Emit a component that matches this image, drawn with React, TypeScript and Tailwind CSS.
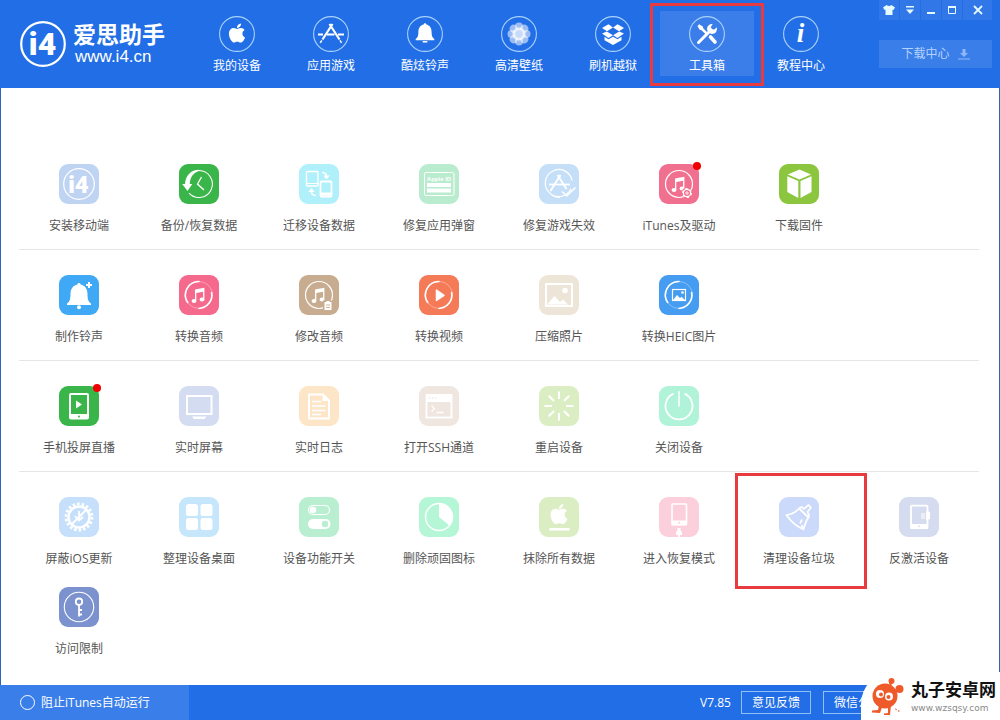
import React, { useState } from 'react';
import { FaApple } from 'react-icons/fa';
import { clsx } from 'clsx';

interface Tool {
  name: string;
  tile: string;
  icon: React.ReactNode;
  dot?: boolean;
  marked?: boolean;
}

interface NavItem {
  name: string;
  icon: React.ReactNode;
}

const BELL = 'M20 8c-1 0-1.6.7-1.6 1.6C14 10.500 11.500 14 11.500 19c0 5-.7 7.500-3.500 9.500V30h24v-1.500c-2.800-2-3.500-4.500-3.500-9.500 0-5-2.500-8.500-6.900-9.400C21.600 8.700 21 8 20 8z';

const ring = <circle cx="20" cy="20" r="13.5" fill="none" stroke="#fff" strokeWidth="1.2" />;

// ring that fades out on its way round, used by the converters
const spinRing = (
  <g fill="none" stroke="#fff">
    <circle cx="20" cy="20" r="13.5" strokeWidth="0.7" opacity="0.5" />
    <path d="M20.500 6.500A13.500 13.500 0 0 0 9 28" strokeWidth="1.6" />
    <path d="M19.500 33.500A13.500 13.500 0 0 0 32.500 17" strokeWidth="1.6" />
  </g>
);

const note = (
  <g fill="#fff">
    <ellipse cx="15" cy="26" rx="2.4" ry="1.9" />
    <ellipse cx="23" cy="24.5" rx="2.4" ry="1.9" />
    <path d="M16 14.500l9.400-1.700v11.700h-1.300v-7.700l-6.800 1.200v8H16z" />
  </g>
);

const i4Text = (
  <text x="19.500" y="28.500" textAnchor="middle" fill="#fff" fontSize="24" fontWeight="900" fontFamily="Roboto, sans-serif">
    i4
  </text>
);

const rays = [0, 45, 90, 135, 180, 225, 270, 315];

const rows: Tool[][] = [
  [
    {
      name: '安装移动端',
      tile: 'bg-[#bfd3f3]',
      icon: <>{i4Text}<circle cx="20" cy="20" r="15.3" fill="none" stroke="#fff" strokeWidth="1.2" /></>,
    },
    {
      name: '备份/恢复数据',
      tile: 'bg-[#3ab54a]',
      icon: (
        <>
          <path d="M20 6.500A13.500 13.500 0 1 1 10 29.200" fill="none" stroke="#fff" strokeWidth="1.1" />
          <path d="M20 5.800C12 6 6.500 11.500 6 20H3.200l5.300 7 4.800-7h-2.500C11 13 14.500 8.500 20 7z" fill="#fff" />
          <path d="M22.500 13L18.500 20l6.500 6" fill="none" stroke="#fff" strokeWidth="1.3" />
        </>
      ),
    },
    {
      name: '迁移设备数据',
      tile: 'bg-[#b0f0fb]',
      icon: (
        <g fill="none" stroke="#fff">
          <rect x="7.500" y="7.500" width="11.500" height="14.500" rx="1" strokeWidth="1.4" />
          <path d="M7.500 19.500H19" />
          <rect x="21.500" y="17.500" width="11" height="15" rx="1" strokeWidth="1.8" />
          <path d="M21.500 30h11" strokeWidth="3" />
          <path d="M23 8.500c3 0 4.500 1.500 4.500 4" strokeWidth="1.6" />
          <path d="M24.300 11.500h6.400l-3.200 4z" fill="#fff" stroke="none" />
          <path d="M17 31.500c-3 0-4.500-1.500-4.500-4" strokeWidth="1.6" />
          <path d="M9.300 28h6.400l-3.200-4z" fill="#fff" stroke="none" />
        </g>
      ),
    },
    {
      name: '修复应用弹窗',
      tile: 'bg-[#b9ebcf]',
      icon: (
        <>
          <rect x="5.500" y="8.500" width="29.500" height="23" rx="1.5" fill="none" stroke="#fff" />
          <text x="20" y="17" textAnchor="middle" fill="#fff" fontSize="6" fontWeight="700" fontFamily="Liberation Sans, sans-serif">
            Apple ID
          </text>
          <rect x="8" y="19" width="24" height="4" fill="#fff" />
          <rect x="8" y="24.500" width="24" height="4" fill="#fff" />
        </>
      ),
    },
    {
      name: '修复游戏失效',
      tile: 'bg-[#c5dff8]',
      icon: (
        <g fill="none" stroke="#fff">
          <path d="M31.500 26A13.500 13.500 0 1 1 33.400 18" transform="rotate(-6 20 20)" strokeWidth="1.2" />
          <path d="M21 33.400c-3 .2-6-.5-8.500-2.200" />
          <path d="M21.500 11L11.500 27M18.500 11l9 14" strokeWidth="2" />
          <path d="M10 20.500h21" strokeWidth="1.8" />
          <path d="M23 27.500l4.700 4.500 8.800-8.500" strokeWidth="1.6" />
        </g>
      ),
    },
    {
      name: 'iTunes及驱动',
      tile: 'bg-[#f2708f]',
      dot: true,
      icon: (
        <>
          {ring}
          {note}
          <circle cx="28" cy="29" r="5.5" fill="#f2708f" />
          <circle cx="28" cy="29" r="3.6" fill="none" stroke="#fff" strokeWidth="1.2" />
          <circle cx="28" cy="29" r="4.4" fill="none" stroke="#fff" strokeWidth="1.2" strokeDasharray="2.300 2.300" />
          <circle cx="28" cy="29" r="1.2" fill="none" stroke="#fff" strokeWidth="0.9" />
        </>
      ),
    },
    {
      name: '下载固件',
      tile: 'bg-[#8cc63f]',
      icon: <path d="M8.800 10.500L20.500 5.500 32 10.500l-11.500 5zM8.300 12.200L19.300 17v17L8.300 28zM32.500 12.200L21.500 17v17l11-6z" fill="#fff" />,
    },
  ],
  [
    {
      name: '制作铃声',
      tile: 'bg-[#3fa9f5]',
      icon: (
        <g fill="#fff">
          <path d={BELL} />
          <circle cx="20" cy="32.300" r="2" />
          <path d="M29 7h2v2h2v2h-2v2h-2v-2h-2V9h2z" />
        </g>
      ),
    },
    { name: '转换音频', tile: 'bg-[#f56a8c]', icon: <>{spinRing}{note}</> },
    {
      name: '修改音频',
      tile: 'bg-[#c7ac90]',
      icon: (
        <>
          {ring}
          {note}
          <path d="M24 25.500h10V36H24z" fill="#c7ac90" />
          <path d="M25.500 27h2v-1h3v1h2v8h-7z" fill="#fff" />
          <path d="M27 30h4M27 32.500h4" stroke="#c7ac90" strokeWidth="0.9" />
        </>
      ),
    },
    {
      name: '转换视频',
      tile: 'bg-[#f47a58]',
      icon: <>{spinRing}<path d="M17.500 15v10.500L25 20.300z" fill="#fff" stroke="#fff" strokeLinejoin="round" strokeWidth="1.5" /></>,
    },
    {
      name: '压缩照片',
      tile: 'bg-[#ece5d8]',
      icon: (
        <>
          <rect x="7" y="9" width="26" height="22" fill="none" stroke="#fff" strokeWidth="2" />
          <circle cx="26" cy="15.500" r="2.800" fill="#fff" />
          <path d="M8 29.500l7.500-8.500 5.500 6 3-2.500 5 5z" fill="#fff" />
        </>
      ),
    },
    {
      name: '转换HEIC图片',
      tile: 'bg-[#459cf0]',
      icon: (
        <>
          {spinRing}
          <rect x="13.500" y="14.500" width="13" height="11" fill="none" stroke="#fff" strokeWidth="1.2" />
          <circle cx="23.500" cy="17.500" r="1.300" fill="#fff" />
          <path d="M14 25l4-5 3 3 1.500-1.200L26 25z" fill="#fff" />
        </>
      ),
    },
  ],
  [
    {
      name: '手机投屏直播',
      tile: 'bg-[#3ab54a]',
      dot: true,
      icon: (
        <>
          <rect x="11" y="8" width="18" height="24.500" rx="1" fill="none" stroke="#fff" strokeWidth="2" />
          <path d="M11 28h18v5H11z" fill="#fff" />
          <circle cx="20" cy="30.500" r="1" fill="#3ab54a" />
          <path d="M17 14.500v8l6-4z" fill="#fff" />
        </>
      ),
    },
    {
      name: '实时屏幕',
      tile: 'bg-[#d3dcf0]',
      icon: (
        <>
          <rect x="8" y="10" width="24.500" height="18" fill="none" stroke="#fff" strokeWidth="2" />
          <path d="M13 30.500h14.500l-2 2.500h-10.500z" fill="#fff" />
        </>
      ),
    },
    {
      name: '实时日志',
      tile: 'bg-[#fde6c8]',
      icon: (
        <>
          <path d="M10 8.500h14l6 6v18H10z" fill="none" stroke="#fff" strokeWidth="2" />
          <path d="M23.500 8v7H30.500z" fill="#fff" />
          <path d="M13 15.500h9M13 20h13.500M13 24.500h13.500M13 28.500h9" stroke="#fff" strokeWidth="1.5" />
        </>
      ),
    },
    {
      name: '打开SSH通道',
      tile: 'bg-[#efe6df]',
      icon: (
        <>
          <rect x="7.500" y="9" width="25" height="22.500" fill="none" stroke="#fff" strokeWidth="1.800" />
          <path d="M7 8h26v8H7z" fill="#fff" />
          <path d="M10 12h1.500M13 12h1.500M16 12h1.500" stroke="#e8dcd2" />
          <path d="M12.500 19.500l3 3-3 3M17.500 26.500h7" fill="none" stroke="#fff" strokeWidth="1.300" />
        </>
      ),
    },
    {
      name: '重启设备',
      tile: 'bg-[#dbeec3]',
      icon: (
        <g stroke="#fff" strokeWidth="2">
          {rays.map((deg) => (
            <path key={deg} d="M20 5.500v7.500" transform={`rotate(${deg} 20 20)`} />
          ))}
        </g>
      ),
    },
    {
      name: '关闭设备',
      tile: 'bg-[#b0f3d9]',
      icon: (
        <g fill="none" stroke="#fff" strokeWidth="1.800">
          <path d="M14.500 7.600a13.500 13.500 0 1 0 11 0" />
          <path d="M20 5v15.500" strokeWidth="1.500" />
        </g>
      ),
    },
  ],
  [
    {
      name: '屏蔽iOS更新',
      tile: 'bg-[#c6e0fb]',
      icon: (
        <g fill="none" stroke="#fff">
          <circle cx="20" cy="20" r="10.500" strokeWidth="2.400" />
          <circle cx="20" cy="20" r="13" strokeWidth="2.800" strokeDasharray="2.500 2.038" />
          <path d="M12.500 27.500l15-15" strokeWidth="2" />
          <path d="M20 14v8M16 19l4 4.500 4-3.500" strokeWidth="1.800" />
        </g>
      ),
    },
    {
      name: '整理设备桌面',
      tile: 'bg-[#c6e6fb]',
      icon: (
        <g fill="#fff">
          <rect x="7" y="7" width="12" height="12" rx="2.500" />
          <rect x="21.500" y="7" width="12" height="12" rx="2.500" />
          <rect x="7" y="21" width="12" height="12" rx="2.500" />
          <rect x="21.500" y="21" width="12" height="12" rx="2.500" />
        </g>
      ),
    },
    {
      name: '设备功能开关',
      tile: 'bg-[#b9efd0]',
      icon: (
        <>
          <rect x="9.500" y="8.500" width="21" height="9" rx="4.500" fill="none" stroke="#fff" strokeWidth="1.200" />
          <circle cx="14" cy="13" r="3.200" fill="#fff" />
          <rect x="9" y="22" width="22.500" height="10" rx="5" fill="#fff" />
          <circle cx="26" cy="27" r="3.200" fill="#b9efd0" />
        </>
      ),
    },
    {
      name: '删除顽固图标',
      tile: 'bg-[#b4f6d6]',
      icon: (
        <>
          <circle cx="20" cy="20" r="13.500" fill="none" stroke="#fff" strokeWidth="1.500" />
          <path d="M20 20V6.500a13.500 13.500 0 0 1 10.500 22z" fill="#fff" />
        </>
      ),
    },
    {
      name: '抹除所有数据',
      tile: 'bg-[#dbeec3]',
      icon: (
        <>
          <FaApple x="8.500" y="5.500" size={23} color="#fff" />
          <rect x="10.500" y="31" width="20" height="2.500" fill="#fff" />
        </>
      ),
    },
    {
      name: '进入恢复模式',
      tile: 'bg-[#fccfdc]',
      icon: (
        <>
          <rect x="13" y="7" width="14.500" height="20.500" rx="1" fill="none" stroke="#fff" strokeWidth="1.600" />
          <path d="M12.500 23.500h15.500v5H12.500z" fill="#fff" />
          <circle cx="20.200" cy="25.800" r="1" fill="#fccfdc" />
          <path d="M18.500 31h3v2.500l1.500 1.500v3h-2v2h-1.800v-2H17v-3l1.500-1.500z" fill="#fff" />
        </>
      ),
    },
    {
      name: '清理设备垃圾',
      tile: 'bg-[#cbd9fb]',
      marked: true,
      icon: (
        <g fill="none" stroke="#fff" strokeWidth="1.700" strokeLinejoin="round">
          <path d="M7.500 18c5-.5 9-2.500 12.500-6.500l9.500 9c-3 3.500-3.500 7.500-5 12C18 29.500 12 25 7.500 18z" />
          <path d="M20 11.500l2.500-1.500 2.500 1.800 4.500-3.800 2.500 2.500-3.500 4.500 1.500 3-.5 2.500z" />
          <path d="M21 26.500l2-4M24.500 32l-2-4" />
        </g>
      ),
    },
    {
      name: '反激活设备',
      tile: 'bg-[#d5dcf0]',
      icon: (
        <>
          <rect x="12" y="8.700" width="16.500" height="22" rx="1" fill="none" stroke="#fff" strokeWidth="1.800" />
          <path d="M11.500 27h17.500v5H11.500z" fill="#fff" />
          <circle cx="20.200" cy="29.300" r="0.900" fill="#d5dcf0" />
          <path d="M22 16h4v6h-4z" fill="#fff" opacity="0.5" />
          <path d="M27 14l4 1v7l-4 1z" fill="#fff" />
        </>
      ),
    },
    {
      name: '访问限制',
      tile: 'bg-[#7b92cf]',
      icon: (
        <g fill="none" stroke="#fff">
          <circle cx="20" cy="20" r="14.700" strokeWidth="1.100" />
          <circle cx="20" cy="14.700" r="3.200" strokeWidth="1.800" />
          <path d="M20 18v11.500M20 23h3M20 27.500h3" strokeWidth="1.800" />
        </g>
      ),
    },
  ],
];

const navItems: NavItem[] = [
  { name: '我的设备', icon: <FaApple x="7" y="6" size={22} color="#fff" /> },
  {
    name: '应用游戏',
    icon: (
      <g fill="none" stroke="#fff" strokeWidth="2.200">
        <path d="M19.500 8L9.500 23.500M16.500 8l10 15.500" />
        <path d="M5 18.500h5M14 18.500h7.500M25 18.500h6" />
        <path d="M8.800 24.300l-1.500 2.500M27 24.300l1.500 2.500" strokeWidth="1.500" />
      </g>
    ),
  },
  {
    name: '酷炫铃声',
    icon: (
      <g fill="#fff" transform="translate(2.500 2.500) scale(.775)">
        <path d={BELL} transform="translate(0 -2)" />
        <path d="M17 29h6v2h-6z" />
      </g>
    ),
  },
  {
    name: '高清壁纸',
    icon: (
      <g fill="#fff">
        {rays.map((deg) => (
          <circle key={deg} cx="18" cy="10.500" r="4" opacity="0.55" transform={`rotate(${deg} 18 18)`} />
        ))}
        <circle cx="18" cy="18" r="6.500" opacity="0.75" />
      </g>
    ),
  },
  {
    name: '刷机越狱',
    icon: (
      <path
        d="M7 12l6.500-3.800 4.500 3.300-6 3.800zM29 12l-6.500-3.800-4.500 3.300 6 3.800zM7 17.500l4.800-2 6.200 3.700-4.500 2.800zM29 17.500l-4.800-2-6.200 3.700 4.500 2.800zM9.500 20.800l4 2.500 4.500-2.500 4.500 2.500 4-2.500v3.500L18 29l-8.500-4.700z"
        fill="#fff"
      />
    ),
  },
  {
    name: '工具箱',
    icon: (
      <>
        <path d="M9.500 26.500L22 14" stroke="#fff" strokeWidth="3" strokeLinecap="round" />
        <path d="M27.700 11.200a5 5 0 1 1-4-3.200l-2 3.200 1.500 2 2.200.3z" fill="#fff" />
        <path d="M8.500 10l1.700-1.700 3.600 2.200.6 1.900 4.600 4.600-1.800 1.800-4.700-4.500-1.900-.6z" fill="#fff" />
        <path d="M21.500 21l4.500 5" stroke="#fff" strokeWidth="3.600" strokeLinecap="round" />
      </>
    ),
  },
  {
    name: '教程中心',
    icon: (
      <text x="17.500" y="26" textAnchor="middle" fill="#fff" fontSize="27" fontWeight="700" fontStyle="italic" fontFamily="Liberation Serif, serif">
        i
      </text>
    ),
  },
];

// red frame that points the reader to a control
function Frame({ className }: { className: string }) {
  return <span className={clsx('pointer-events-none absolute border-3 border-[#e83b3f]', className)} />;
}

function ToolButton({ tool }: { tool: Tool }) {
  return (
    <button type="button" className="relative flex flex-col items-center gap-3">
      <span className={clsx('relative size-10 rounded-[9px]', tool.tile)}>
        <svg viewBox="0 0 40 40" className="size-10">{tool.icon}</svg>
        {tool.dot && <span className="absolute -top-0.5 -right-0.5 size-2 rounded-full bg-[#f00000]" />}
      </span>
      <span className="whitespace-nowrap">{tool.name}</span>
      {tool.marked && <Frame className="-top-6 -right-2 -bottom-5 -left-1" />}
    </button>
  );
}

function WindowButtons() {
  const btn = 'flex h-5 flex-1 items-center justify-center bg-[#3177e8]';
  return (
    <div className="flex gap-px">
      <button type="button" aria-label="皮肤" className={btn}>
        <svg viewBox="0 0 12 10" className="h-2.5 w-3" fill="#e4fbff">
          <path d="M3.500 0q2.500 2 5 0L12 2.500 10.500 5 9.500 4.500V10h-7V4.500L1.500 5 0 2.500z" />
        </svg>
      </button>
      <button type="button" aria-label="菜单" className={btn}>
        <svg viewBox="0 0 10 8" className="h-2 w-2.5" fill="#e4fbff">
          <path d="M1 0h8v1.500H1zM1 3.500h8L5 8z" />
        </svg>
      </button>
      <button type="button" aria-label="最小化" className={btn}>
        <svg viewBox="0 0 10 10" className="size-2.5" fill="#e4fbff">
          <path d="M1 7h8v2H1z" />
        </svg>
      </button>
      <button type="button" aria-label="最大化" className={btn}>
        <svg viewBox="0 0 10 10" className="size-2.5" fill="none" stroke="#e4fbff">
          <path d="M1.500 2h7v6.500h-7z" />
          <path d="M1 2h8" strokeWidth="2" />
        </svg>
      </button>
      <button type="button" aria-label="关闭" className="flex h-5 w-[29px] items-center justify-center bg-[#3177e8]">
        <svg viewBox="0 0 10 10" className="size-2.5" stroke="#e4fbff" strokeWidth="1.8">
          <path d="M1 1l8 8M9 1L1 9" />
        </svg>
      </button>
    </div>
  );
}

function Header({ active, onSelect }: { active: string; onSelect: (name: string) => void }) {
  return (
    <header className="flex h-[88px] bg-[#226ee6] pr-2 text-white">
      <div className="flex w-[190px] shrink-0 items-center gap-[7px] pl-5">
        <svg viewBox="0 0 46 46" className="size-[46px]">
          <circle cx="23" cy="23" r="21.800" fill="none" stroke="#fff" strokeWidth="2.200" />
          <text x="22.500" y="34" textAnchor="middle" fill="#fff" fontSize="32" fontWeight="900" fontFamily="Roboto, sans-serif">
            i4
          </text>
        </svg>
        <div className="font-['Liberation_Sans','Noto_Sans_CJK_SC',sans-serif]">
          <div className="text-[23px] leading-[26px] font-bold">爱思助手</div>
          <div className="pl-0.5 text-[17px] leading-[18px]">www.i4.cn</div>
        </div>
      </div>

      <nav className="flex pt-[11px]">
        {navItems.map((item) => (
          <button
            key={item.name}
            type="button"
            onClick={() => onSelect(item.name)}
            className={clsx(
              'relative flex h-[65px] w-[94px] flex-col items-center gap-1 pt-[5px]',
              item.name === active && 'bg-[#3b7de9]'
            )}
          >
            <svg viewBox="0 0 36 36" className="size-9 shrink-0">
              <circle cx="18" cy="18" r="17.400" fill="none" stroke="#a9d2fb" strokeWidth="1.100" />
              {item.icon}
            </svg>
            <span>{item.name}</span>
            {item.name === active && <Frame className="-top-2 -right-2.5 -bottom-2.5 -left-2.5" />}
          </button>
        ))}
      </nav>

      <div className="ml-auto flex w-[113px] flex-col gap-5">
        <WindowButtons />
        <button type="button" className="flex h-7 items-center justify-center gap-2 bg-[#3a7eea] text-[#b4d3fa]">
          下载中心
          <svg viewBox="0 0 12 12" className="size-3" fill="#8fb8f5">
            <path d="M4.500 1h3v4H10L6 9 2 5h2.500zM0 10.500h12v1H0z" />
          </svg>
        </button>
      </div>
    </header>
  );
}

function SiteMark() {
  return (
    <div className="absolute right-0 bottom-0 flex h-12 items-center gap-1 rounded-tl-[32px] bg-white pr-1 pl-2.5">
      <svg viewBox="0 0 36 38" className="h-[38px] w-9" fill="#ef5a2b">
        <circle cx="14" cy="19" r="12.500" />
        <circle cx="20.500" cy="4" r="3" />
        <circle cx="28.500" cy="12" r="4" />
        <path d="M18 7l2-4 2 1-2 5zM22 14l6-4 1.500 2-6 5z" />
        <path d="M8 28l-1 5-6 .5v2l8 .5 2.500-7zM17 29v7l-4 .5v1.500h6l1-10z" />
        <path d="M24 31l2 1.500-1 1zM27 33l2 1-1.500 1z" />
        <circle cx="9" cy="17" r="4" fill="#fff" />
        <circle cx="18" cy="19.500" r="4" fill="#fff" />
        <circle cx="10" cy="17.500" r="2" />
        <circle cx="17.500" cy="20" r="2" />
      </svg>
      <div>
        <div className="text-[17px] leading-6 font-bold text-[#111]">丸子安卓网</div>
        <div className="font-['DejaVu_Sans',sans-serif] text-[9px] leading-3 text-[#8a8a8a]">www.wzsqsy.com</div>
      </div>
    </div>
  );
}

export default function App() {
  const [active, setActive] = useState('工具箱');
  const [blockItunes, setBlockItunes] = useState(false);

  return (
    <div className="min-h-screen bg-white font-['Open_Sans','Noto_Sans_CJK_SC',sans-serif] text-xs leading-5 text-[#555]">
      <Header active={active} onSelect={setActive} />

      <main className="border-x border-[#2b66bf] pt-[51px] pr-5 pb-[26px] pl-[18px]">
        {rows.map((tools, i) => (
          <section
            key={i}
            className={clsx('grid grid-cols-8 gap-y-[18px] pt-[25px]', i < rows.length - 1 && 'border-b border-[#e6e6e6] pb-[13px]')}
          >
            {tools.map((tool) => (
              <ToolButton key={tool.name} tool={tool} />
            ))}
          </section>
        ))}
      </main>

      <footer className="relative flex h-[35px] items-center bg-[#226ee6] text-white">
        <label className="flex h-full w-[189px] items-center gap-1.5 bg-[#3a7ee9] pl-5">
          <input
            type="checkbox"
            checked={blockItunes}
            onChange={(e) => setBlockItunes(e.target.checked)}
            className="size-[15px] appearance-none rounded-full border border-white checked:bg-white"
          />
          阻止iTunes自动运行
        </label>
        <div className="ml-auto flex items-center pr-[95px]">
          <span className="mr-2.5">V7.85</span>
          <button type="button" className="mr-3 h-[23px] border border-[#8fc0f8] px-2.5">意见反馈</button>
          <button type="button" className="h-[23px] border border-[#8fc0f8] px-2.5">微信公众号</button>
        </div>
        <SiteMark />
      </footer>
    </div>
  );
}
